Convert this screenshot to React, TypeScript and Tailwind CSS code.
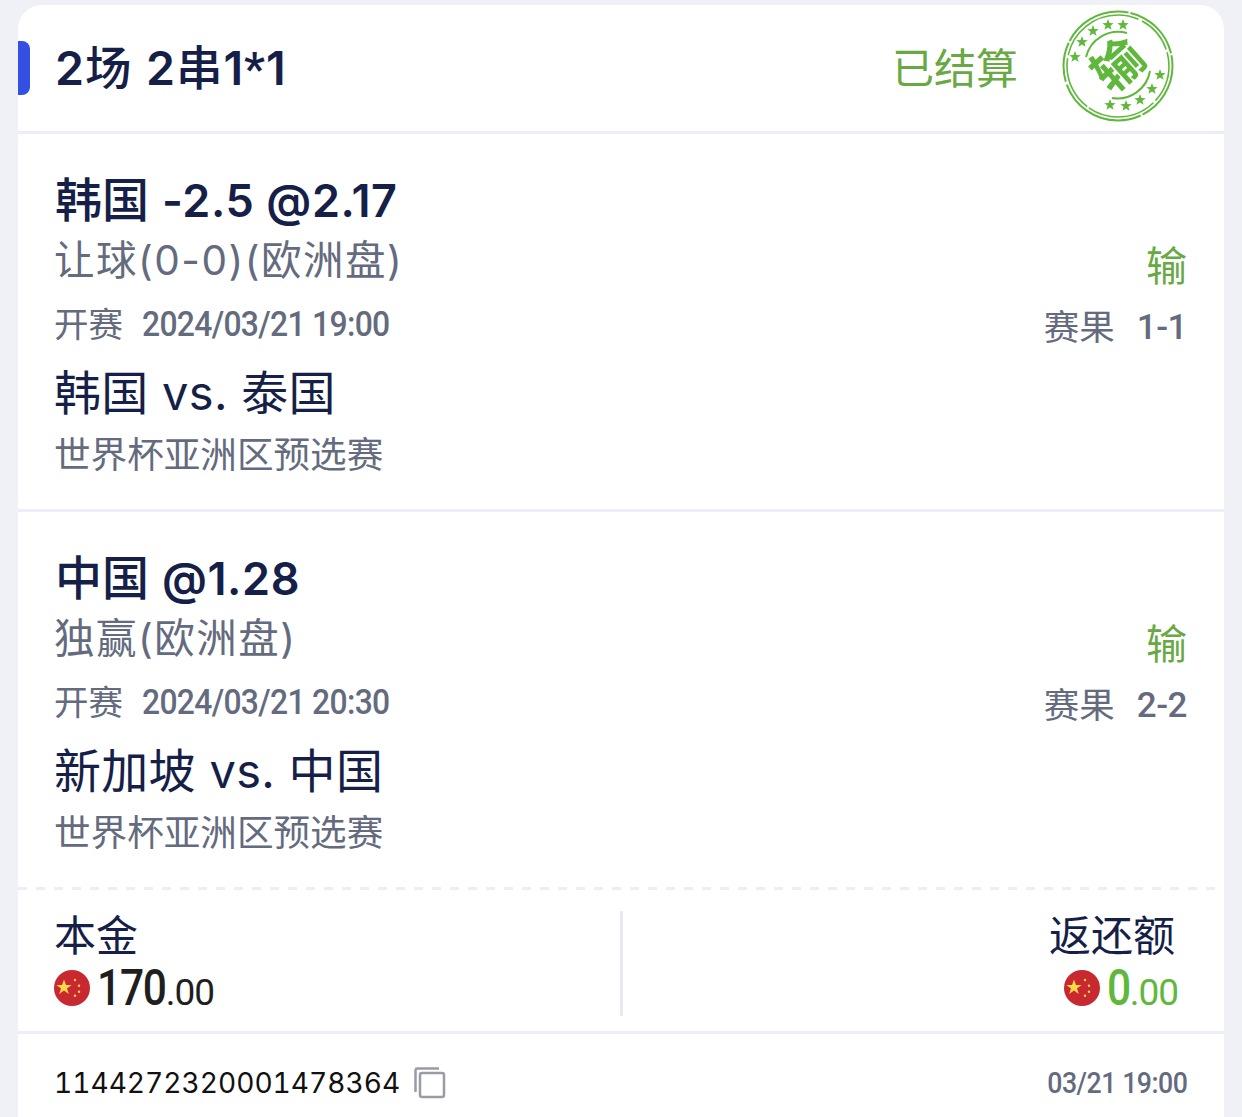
const cjk = "font-['Inter','Noto_Sans_CJK_SC',sans-serif]";
const din = "font-['Roboto','Noto_Sans_CJK_SC',sans-serif]";

function Star({ x, y, r = 6 }: { x: number; y: number; r?: number }) {
  const pts = Array.from({ length: 10 }, (_, i) => {
    const a = (-90 + i * 36) * (Math.PI / 180);
    const q = i % 2 === 0 ? r : r * 0.42;
    return `${x + q * Math.cos(a)},${y + q * Math.sin(a)}`;
  }).join(" ");
  return <polygon points={pts} fill="#5fb83c" />;
}

function Stamp() {
  return (
    <svg width="112" height="112" viewBox="0 0 112 112" className="shrink-0 mt-[-4px]">
      <circle cx="56" cy="56" r="54.5" fill="none" stroke="#5fb83c" strokeWidth="2" strokeDasharray="60 2 90 3 40 2 70 2" />
      <circle cx="56" cy="56" r="51" fill="none" stroke="#5fb83c" strokeWidth="1.6" strokeDasharray="38 3 70 2 55 3 90 4" />
      <path d="M24 47 A33 33 0 0 1 65 23" fill="none" stroke="#5fb83c" strokeWidth="2" />
      <path d="M88 61 A33 33 0 0 1 50 88" fill="none" stroke="#5fb83c" strokeWidth="2" />
      <Star x={13} y={47} /><Star x={20} y={32} /><Star x={31} y={21} /><Star x={46} y={15} /><Star x={61} y={15} />
      <Star x={98} y={65} /><Star x={90} y={79} /><Star x={78} y={90} /><Star x={64} y={96} /><Star x={48} y={95} />
      <text x="56" y="73" textAnchor="middle" transform="rotate(-42 56 55)" fontSize="50" fontWeight="700" fill="#5fb83c" style={{ fontFamily: "'Noto Sans CJK SC', sans-serif" }}>输</text>
    </svg>
  );
}

function Flag() {
  return (
    <svg width="36" height="36" viewBox="0 0 36 36" className="shrink-0">
      <circle cx="18" cy="18" r="18" fill="#c8282f" />
      <polygon points="10,7.5 12,13 17.6,13 13,16.4 14.8,22 10,18.6 5.2,22 7,16.4 2.4,13 8,13" transform="translate(0 2)" fill="#fbd84a" />
      <circle cx="21" cy="10" r="1.2" fill="#fbd84a" />
      <circle cx="25" cy="15.7" r="1.2" fill="#fbd84a" />
      <circle cx="25" cy="21.7" r="1.2" fill="#fbd84a" />
      <circle cx="21" cy="25.7" r="1.2" fill="#fbd84a" />
    </svg>
  );
}

function Amount({ whole, color, squeeze }: { whole: string; color: string; squeeze: string }) {
  return (
    <div className="flex items-center gap-[7px] h-[40px] mt-[6px]">
      <Flag />
      <span className={`${din} ${color} font-medium leading-none whitespace-nowrap`}>
        <span className={`text-[50px] inline-block origin-left scale-x-[0.85] tracking-[-1.5px] ${squeeze}`}>{whole}</span>
        <span className="text-[37px] font-normal tracking-[-1px]">.00</span>
      </span>
    </div>
  );
}

function Bet(p: { pick: string; odds: string; market: string; time: string; score: string; teams: string }) {
  return (
    <section className="flex justify-between pl-[36px] pr-[37px] h-[375px] pt-[38px]">
      <div className="flex flex-col">
        <div className={`${cjk} text-[47px] leading-[56px] ml-[1px] font-medium text-[#161f47] whitespace-nowrap`}>
          {p.pick}
          <span className="text-[45px] font-semibold tracking-[0.6px] ml-[1px]">{p.odds}</span>
        </div>
        <div className={`${cjk} text-[40.5px] leading-[50px] mt-[7px] tracking-[1.5px] text-[#646b7e] whitespace-nowrap`}>{p.market}</div>
        <div className="mt-[17px] flex items-center h-[44px] whitespace-nowrap text-[#646b7e]">
          <span className={`${cjk} text-[34.5px]`}>开赛</span>
          <span className={`${din} text-[35px] font-medium ml-[19px] inline-block origin-left scale-x-[0.91] tracking-[-0.75px]`}>{p.time}</span>
        </div>
        <div className={`${cjk} text-[47px] leading-[56px] mt-[18px] tracking-[0.3px] text-[#161f47] whitespace-nowrap`}>{p.teams}</div>
        <div className={`${cjk} text-[36.6px] leading-[46px] mt-[11px] text-[#646b7e] whitespace-nowrap`}>世界杯亚洲区预选赛</div>
      </div>
      <div className="flex flex-col items-end pt-[64px]">
        <div className={`${cjk} text-[41px] leading-[60px] text-[#68a944]`}>输</div>
        <div className="flex items-center h-[46px] mt-[9px] whitespace-nowrap text-[#646b7e]">
          <span className={`${cjk} text-[35.5px]`}>赛果</span>
          <span className={`${din} text-[35px] font-medium ml-[22px] tracking-[-0.5px]`}>{p.score}</span>
        </div>
      </div>
    </section>
  );
}

export default function App() {
  return (
    <div className="bg-[#eff1f6] h-[1117px] w-[1242px] overflow-hidden pt-[5px] pl-[18px] pr-[18px]">
      <div className="bg-white rounded-t-[24px] h-[1112px]">
        <header className="relative h-[129px] flex items-center justify-between pl-[37px] pr-[50px] border-b-[3px] border-[#ebeef7]">
          <div className="absolute left-0 top-[36px] w-[12px] h-[54px] bg-[#3350e3] rounded-r-[8px]" />
          <div className={`${cjk} text-[46.5px] pt-[3px] font-medium tracking-[1px] text-[#161f47] whitespace-nowrap`}>
            <span className="font-semibold">2</span>场 <span className="font-semibold">2</span>串<span className="font-semibold">1</span>
            <span className="font-['Roboto',sans-serif] font-semibold">*</span>
            <span className="font-semibold">1</span>
          </div>
          <div className="flex items-center gap-[44px]">
            <div className={`${cjk} text-[42px] text-[#68a944] whitespace-nowrap`}>已结算</div>
            <Stamp />
          </div>
        </header>
        <Bet pick="韩国" odds=" -2.5 @2.17" market="让球(0-0)(欧洲盘)" time="2024/03/21 19:00" score="1-1" teams="韩国 vs. 泰国" />
        <div className="border-t-[3px] border-[#ebeef7]" />
        <Bet pick="中国" odds=" @1.28" market="独赢(欧洲盘)" time="2024/03/21 20:30" score="2-2" teams="新加坡 vs. 中国" />
        <div className="h-[3px] bg-[repeating-linear-gradient(90deg,#ebeef7_0_9px,transparent_9px_18px)]" />
        <section className="h-[141px] flex items-start pt-[21px]">
          <div className="w-[605px] shrink-0 h-[105px] pl-[36px] flex flex-col border-r-[3px] border-[#e6e9f2]">
            <div className={`${cjk} text-[42px] leading-[52px] -mt-[1px] text-[#161f47]`}>本金</div>
            <Amount whole="170" color="text-[#1f1f1f]" squeeze="-mr-[12px]" />
          </div>
          <div className="flex-1 h-[105px] pr-[46px] flex flex-col items-end">
            <div className={`${cjk} text-[42px] leading-[52px] -mt-[1px] mr-[3px] text-[#161f47]`}>返还额</div>
            <Amount whole="0" color="text-[#5fb83c]" squeeze="-mr-[4px]" />
          </div>
        </section>
        <footer className="border-t-[3px] border-[#ebeef7] h-[83px] pl-[36px] pr-[36px] pt-[19px] flex items-center justify-between">
          <div className="flex items-center gap-[14px]">
            <span className="font-['Inter',sans-serif] text-[28.1px] tabular-nums text-[#111111] whitespace-nowrap">1144272320001478364</span>
            <svg width="32" height="32" viewBox="0 0 32 32" fill="none" stroke="#9a9ca5" strokeWidth="2.5">
              <rect x="6" y="6" width="24" height="24" rx="2" />
              <path d="M1.5 25 V3 A2 2 0 0 1 3.5 1.5 H25" />
            </svg>
          </div>
          <span className={`${din} text-[29px] mt-[1px] font-medium text-[#646b7e] inline-block origin-right scale-x-[0.92] tracking-[-0.5px] whitespace-nowrap`}>03/21 19:00</span>
        </footer>
      </div>
    </div>
  );
}
